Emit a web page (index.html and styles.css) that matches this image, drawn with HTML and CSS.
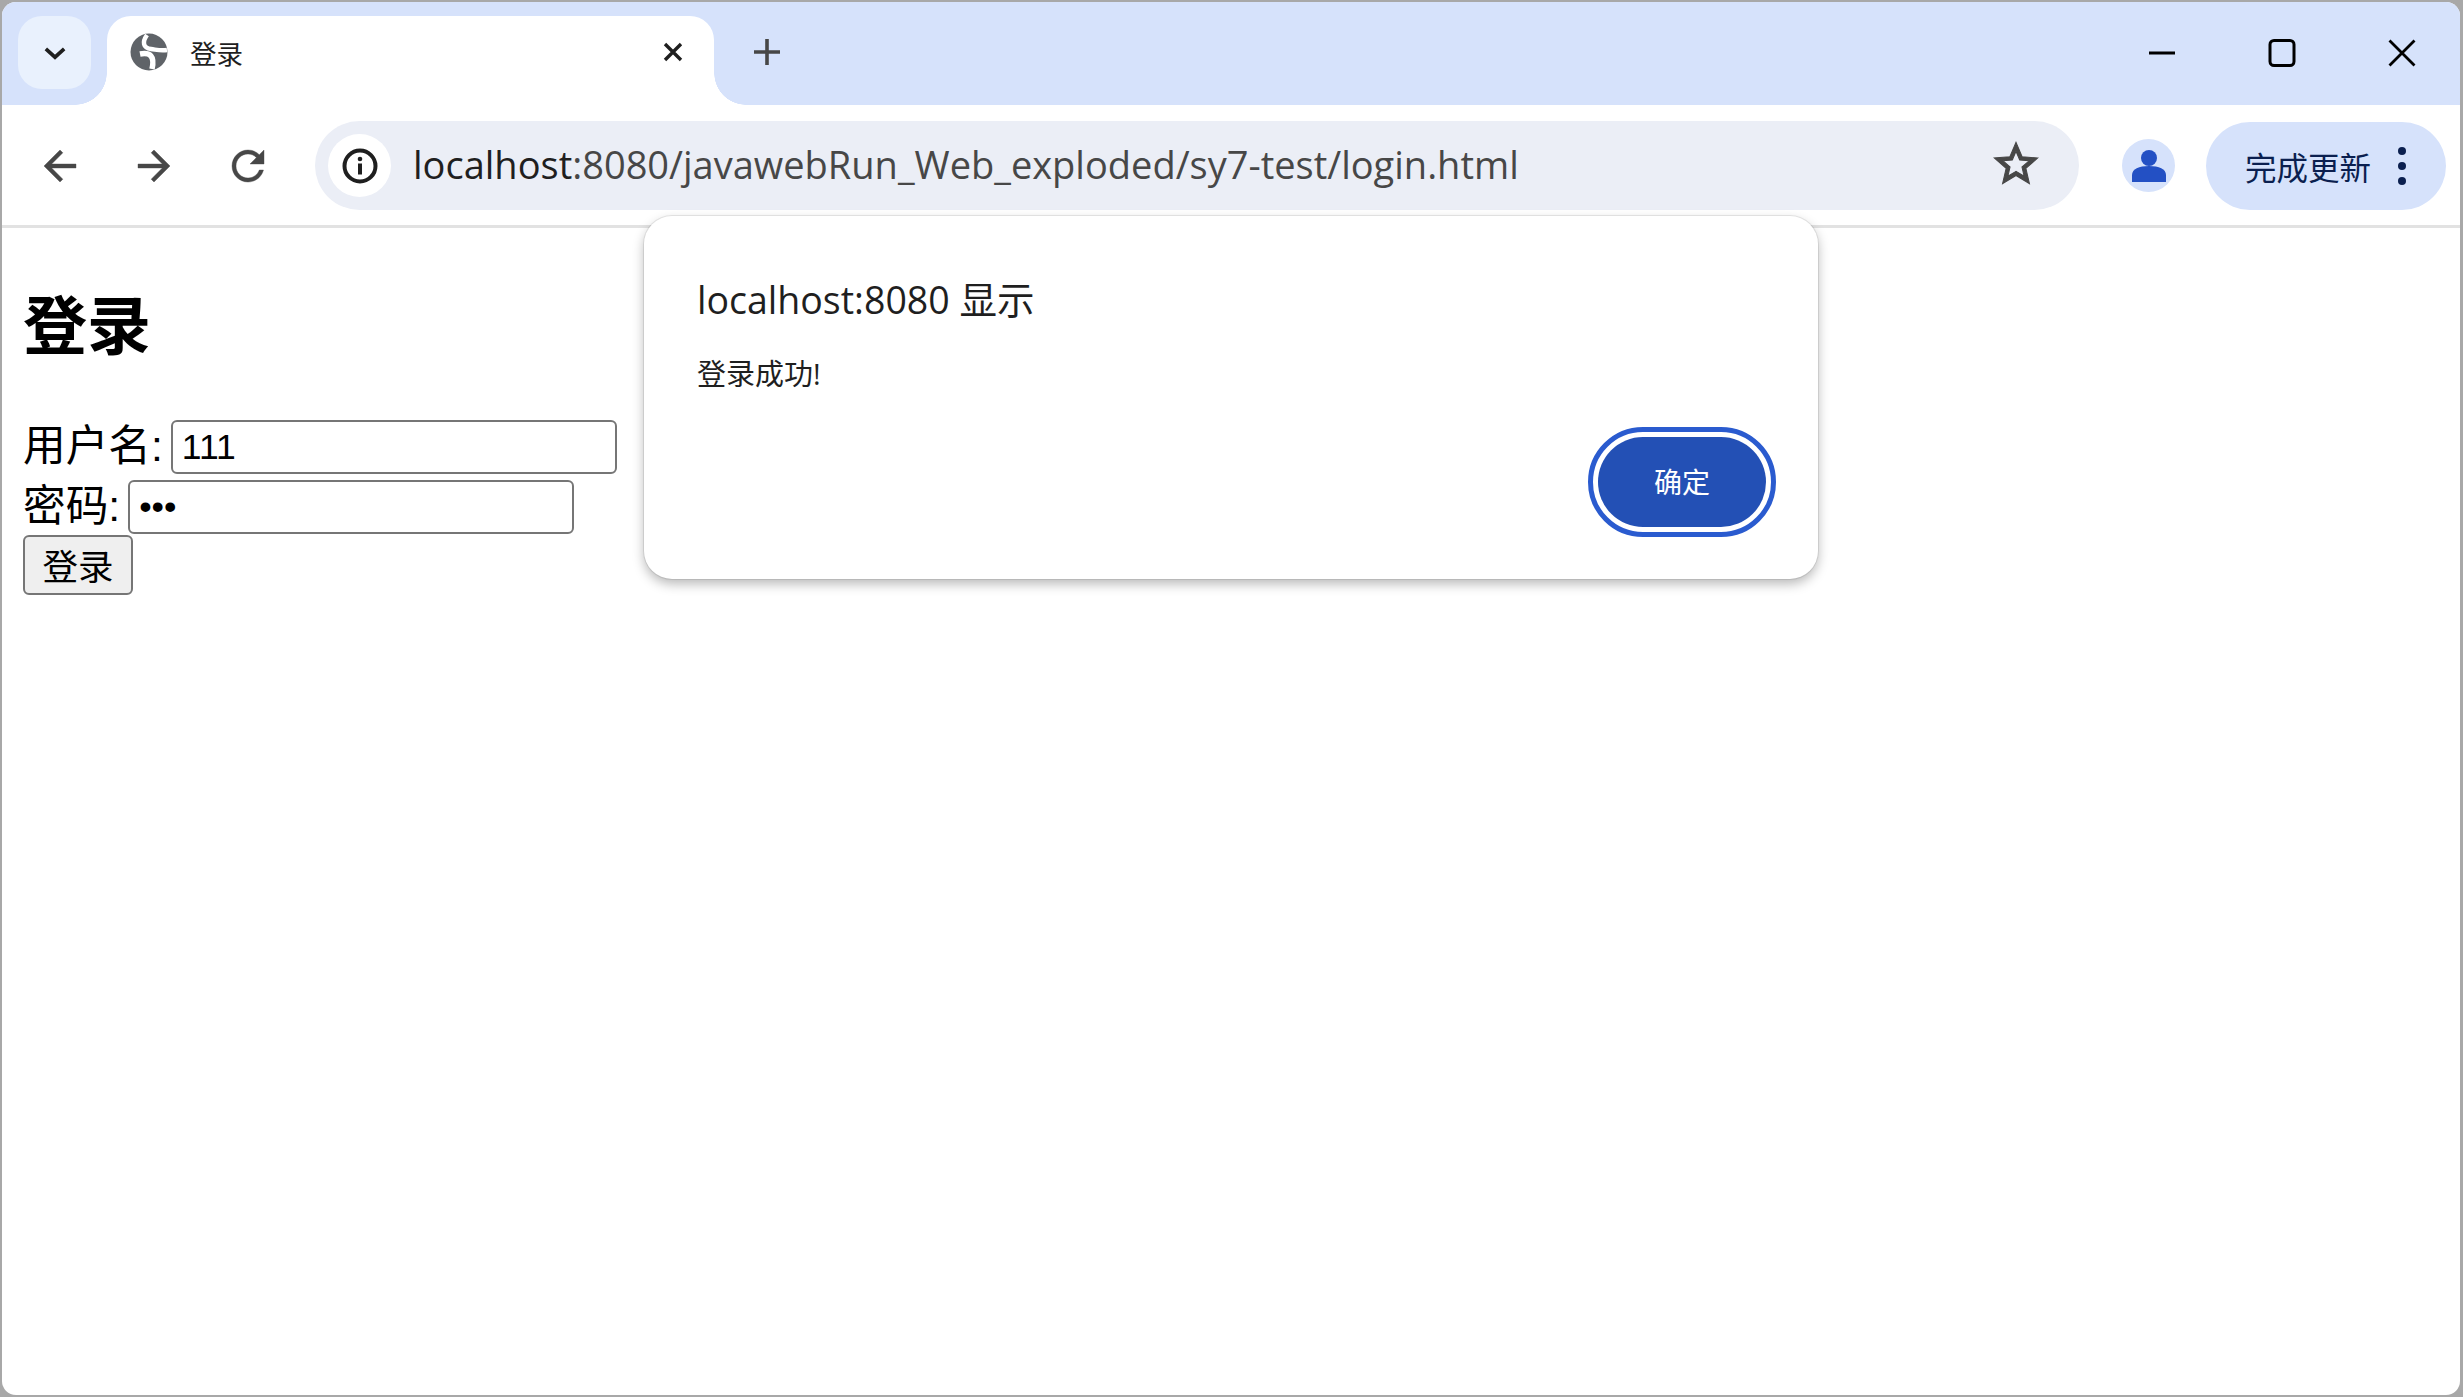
FILE: index.html
```html
<!DOCTYPE html>
<html lang="zh-CN">
<head>
<meta charset="utf-8">
<title>登录</title>
<link rel="stylesheet" href="styles.css">
</head>
<body>
<div class="window">
  <header class="tabstrip">
    <button class="tabsearch" aria-label="tabs">
      <svg class="chev" viewBox="0 0 24 14"><path d="M2 2l10 9 10-9" fill="none" stroke="#1f1f1f" stroke-width="4"/></svg>
    </button>
    <div class="tab">
      <svg class="globe" viewBox="0 0 38 38">
        <circle cx="19" cy="19" r="18.5" fill="#5f6368"/>
        <path d="M17 2C12 9 13 15 21 16C28 17 31 18 37 17" fill="none" stroke="#fff" stroke-width="4.500"/>
        <path d="M10 21C20 19 25 23 22 36" fill="none" stroke="#fff" stroke-width="5.500"/>
      </svg>
      <span class="tabtitle">登录</span>
      <svg class="tabclose" viewBox="0 0 20 20"><path d="M2 2l16 16M18 2L2 18" stroke="#1f1f1f" stroke-width="3.400"/></svg>
    </div>
    <svg class="newtab" viewBox="0 0 26 26"><path d="M13 0v26M0 13h26" stroke="#474747" stroke-width="3.600"/></svg>
    <div class="winctrls">
      <svg class="winbtn" viewBox="0 0 28 28"><path d="M1 14h26" stroke="#000" stroke-width="3"/></svg>
      <svg class="winbtn" viewBox="0 0 28 28"><rect x="2" y="1.500" width="24" height="25" rx="4" fill="none" stroke="#000" stroke-width="3"/></svg>
      <svg class="winbtn" viewBox="0 0 28 28"><path d="M1.500 1.500l25 25M26.500 1.500l-25 25" stroke="#000" stroke-width="2.800"/></svg>
    </div>
  </header>

  <nav class="toolbar">
    <svg class="navicon" viewBox="0 0 24 24"><path d="M20 11H7.830l5.590-5.590L12 4l-8 8 8 8 1.410-1.410L7.830 13H20v-2z"/></svg>
    <svg class="navicon" viewBox="0 0 24 24"><path d="M4 11h12.170l-5.590-5.590L12 4l8 8-8 8-1.410-1.410L16.170 13H4v-2z"/></svg>
    <svg class="navicon" viewBox="0 0 24 24"><path d="M17.650 6.350C16.200 4.900 14.210 4 12 4c-4.420 0-7.990 3.580-7.990 8s3.570 8 7.990 8c3.730 0 6.840-2.550 7.730-6h-2.080c-.82 2.330-3.040 4-5.650 4-3.310 0-6-2.690-6-6s2.690-6 6-6c1.660 0 3.140.69 4.220 1.780L13 11h7V4l-2.350 2.350z"/></svg>
    <div class="omnibox">
      <span class="siteinfo">
        <svg class="infoicon" viewBox="0 0 36 36">
          <circle cx="18" cy="18" r="15.500" fill="none" stroke="#1f1f1f" stroke-width="4"/>
          <rect x="16" y="15.500" width="4" height="11" fill="#1f1f1f"/>
          <circle cx="18" cy="11" r="2.300" fill="#1f1f1f"/>
        </svg>
      </span>
      <span class="url"><span class="host">localhost</span>:8080/javawebRun_Web_exploded/sy7-test/login.html</span>
      <svg class="star" viewBox="0 0 24 24"><path d="M22 9.240l-7.190-.62L12 2 9.190 8.630 2 9.240l5.460 4.730L5.820 21 12 17.270 18.180 21l-1.630-7.030L22 9.240zM12 15.400l-3.760 2.270 1-4.280-3.320-2.880 4.380-.38L12 6.100l1.710 4.040 4.380.38-3.320 2.880 1 4.280L12 15.400z"/></svg>
    </div>
    <span class="avatar">
      <svg class="avatarface" viewBox="0 0 34 34"><circle cx="17" cy="9" r="8"/><path d="M0 33v-7c0-6 7-9 17-9s17 3 17 9v7z"/></svg>
    </span>
    <div class="update">
      <span class="updatetext">完成更新</span>
      <span class="kebab"><i></i><i></i><i></i></span>
    </div>
  </nav>

  <main class="page">
    <h1 class="title">登录</h1>
    <form class="form">
      <div class="row"><label class="label">用户名:</label><input class="field" type="text" value="111"></div>
      <div class="row"><label class="label">密码:</label><input class="field" type="password" value="111"></div>
      <button class="submit" type="button">登录</button>
    </form>
  </main>

  <div class="dialog" role="alertdialog">
    <div class="dlgtitle">localhost:8080 显示</div>
    <div class="dlgmsg">登录成功!</div>
    <div class="dlgactions"><button class="ok" type="button">确定</button></div>
  </div>
</div>
</body>
</html>
```

FILE: styles.css
```css
* { box-sizing: border-box; }
html, body { height: 100%; }
body {
  margin: 0;
  background: #a8a8a8;
  font-family: "Liberation Sans", "Noto Sans CJK SC", sans-serif;
  overflow: hidden;
}
.window {
  position: relative;
  height: 1393px;
  margin: 2px 3px 0 2px;
  background: #fff;
  border-radius: 14px;
  display: flex;
  flex-direction: column;
  overflow: hidden;
}

/* tab strip */
.tabstrip {
  flex: none;
  height: 103px;
  background: #d6e2fb;
  padding: 14px 44px 0 16px;
  display: flex;
  align-items: flex-start;
}
.tabsearch {
  width: 73px;
  height: 73px;
  padding: 0;
  border: 0;
  border-radius: 24px;
  background: #e9f1fd;
  display: flex;
  align-items: center;
  justify-content: center;
}
.chev { width: 22px; height: 13px; margin-top: 2px; }
.tab {
  position: relative;
  z-index: 2;
  width: 607px;
  height: 89px;
  margin-left: 16px;
  padding: 17px 31px 34px 23px;
  background: #fff;
  border-radius: 24px 24px 0 0;
  display: flex;
  align-items: center;
}
.tab::before, .tab::after {
  content: "";
  position: absolute;
  bottom: 0;
  width: 32px;
  height: 32px;
}
.tab::before {
  left: -32px;
  background: radial-gradient(circle at 0 0, transparent 31.500px, #fff 32px);
}
.tab::after {
  right: -32px;
  background: radial-gradient(circle at 100% 0, transparent 31.500px, #fff 32px);
}
.globe { width: 38px; height: 38px; flex: none; }
.tabtitle {
  margin-left: 22px;
  flex: 1;
  font: 26.500px "Noto Sans CJK SC", sans-serif;
  color: #1f1f1f;
}
.tabclose { width: 20px; height: 20px; flex: none; }
.newtab { width: 26px; height: 26px; margin: 23px 0 0 40px; flex: none; }
.winctrls {
  margin-left: auto;
  margin-top: 23px;
  display: flex;
  gap: 92px;
}
.winbtn { width: 28px; height: 28px; }

/* toolbar */
.toolbar {
  position: relative;
  z-index: 1;
  flex: none;
  height: 120px;
  padding: 16px 14px 15px 34px;
  background: #fff;
  border-radius: 24px 24px 0 0;
  display: flex;
  align-items: center;
}
.navicon { width: 48px; height: 48px; margin-right: 46px; fill: #474747; stroke: #474747; stroke-width: .2; flex: none; }
.navicon:nth-child(3) { margin-right: 44px; }
.omnibox {
  flex: 1;
  height: 89px;
  margin-left: -1px;
  padding: 0 37px 0 13px;
  border-radius: 45px;
  background: #ebeef6;
  display: flex;
  align-items: center;
}
.siteinfo {
  width: 63px;
  height: 63px;
  border-radius: 50%;
  background: #fff;
  display: flex;
  align-items: center;
  justify-content: center;
  flex: none;
}
.infoicon { width: 36px; height: 36px; }
.url {
  flex: 1;
  margin: -3px 0 0 22px;
  font: 38px "Open Sans", sans-serif;
  color: #474747;
  white-space: nowrap;
}
.host { color: #1f1f1f; }
.star { width: 52px; height: 52px; margin-bottom: 4px; fill: #474747; stroke: #474747; stroke-width: .5; flex: none; }
.avatar {
  width: 53px;
  height: 53px;
  margin-left: 43px;
  border-radius: 50%;
  background: #d6e2fb;
  display: flex;
  align-items: center;
  justify-content: center;
  flex: none;
}
.avatarface { width: 34px; height: 34px; fill: #2350c4; }
.update {
  width: 240px;
  height: 88px;
  margin-left: 31px;
  padding-left: 39px;
  border-radius: 44px;
  background: #d6e2fb;
  display: flex;
  align-items: center;
  flex: none;
}
.updatetext {
  font: 400 31.500px "Noto Sans CJK SC", sans-serif;
  color: #0b1f4f;
  white-space: nowrap;
}
.kebab {
  margin-left: 27px;
  display: flex;
  flex-direction: column;
  gap: 7px;
}
.kebab i {
  width: 8px;
  height: 8px;
  border-radius: 50%;
  background: #0b1f4f;
  display: block;
}

/* page */
.page {
  flex: 1;
  border-top: 3px solid #e2e2e2;
  padding: 0 0 0 21px;
}
.title {
  margin: 57px 0 16px;
  height: 116px;
  font-size: 64px;
  line-height: 84px;
  font-weight: 700;
  color: #000;
}
.form { display: flex; flex-direction: column; align-items: flex-start; }
.row { display: flex; align-items: center; height: 60px; gap: 8px; }
.row + .submit { margin-top: -2px; }
.label { font-size: 42.670px; line-height: 54px; margin-top: -3px; color: #000; white-space: nowrap; }
.field {
  width: 446px;
  height: 54px;
  padding: 2.670px 9px;
  border: 2.670px solid #767676;
  border-radius: 6px;
  background: #fff;
  font: 35.500px "Liberation Sans", sans-serif;
  color: #000;
}
.submit {
  width: 110px;
  height: 60px;
  padding: 0;
  border: 2.670px solid #767676;
  border-radius: 6px;
  background: #efefef;
  font: 35.500px "Noto Sans CJK SC", sans-serif;
  line-height: 52px;
  color: #000;
}

/* dialog */
.dialog {
  position: absolute;
  z-index: 5;
  left: 642px;
  top: 214px;
  width: 1174px;
  height: 363px;
  padding: 54px 28px 0 53px;
  border-radius: 28px;
  background: #fff;
  box-shadow: 0 0 0 1px rgba(0,0,0,.08), 0 5px 12px rgba(0,0,0,.28);
}
.dlgtitle {
  height: 60px;
  font: 37.500px/60px "Open Sans", "Noto Sans CJK SC", sans-serif;
  color: #1f1f1f;
}
.dlgmsg {
  margin-top: 24px;
  height: 40px;
  font: 400 29px/40px "Open Sans", "Noto Sans CJK SC", sans-serif;
  color: #1f1f1f;
}
.dlgactions { margin-top: 33px; display: flex; justify-content: flex-end; }
.ok {
  width: 168px;
  height: 90px;
  margin: 10px 24px 10px 0;
  padding: 0 0 3px;
  border: 0;
  border-radius: 45px;
  background: #2350b5;
  color: #fff;
  font: 400 28px "Noto Sans CJK SC", sans-serif;
  outline: 5px solid #2a5bcf;
  outline-offset: 5px;
}
```
